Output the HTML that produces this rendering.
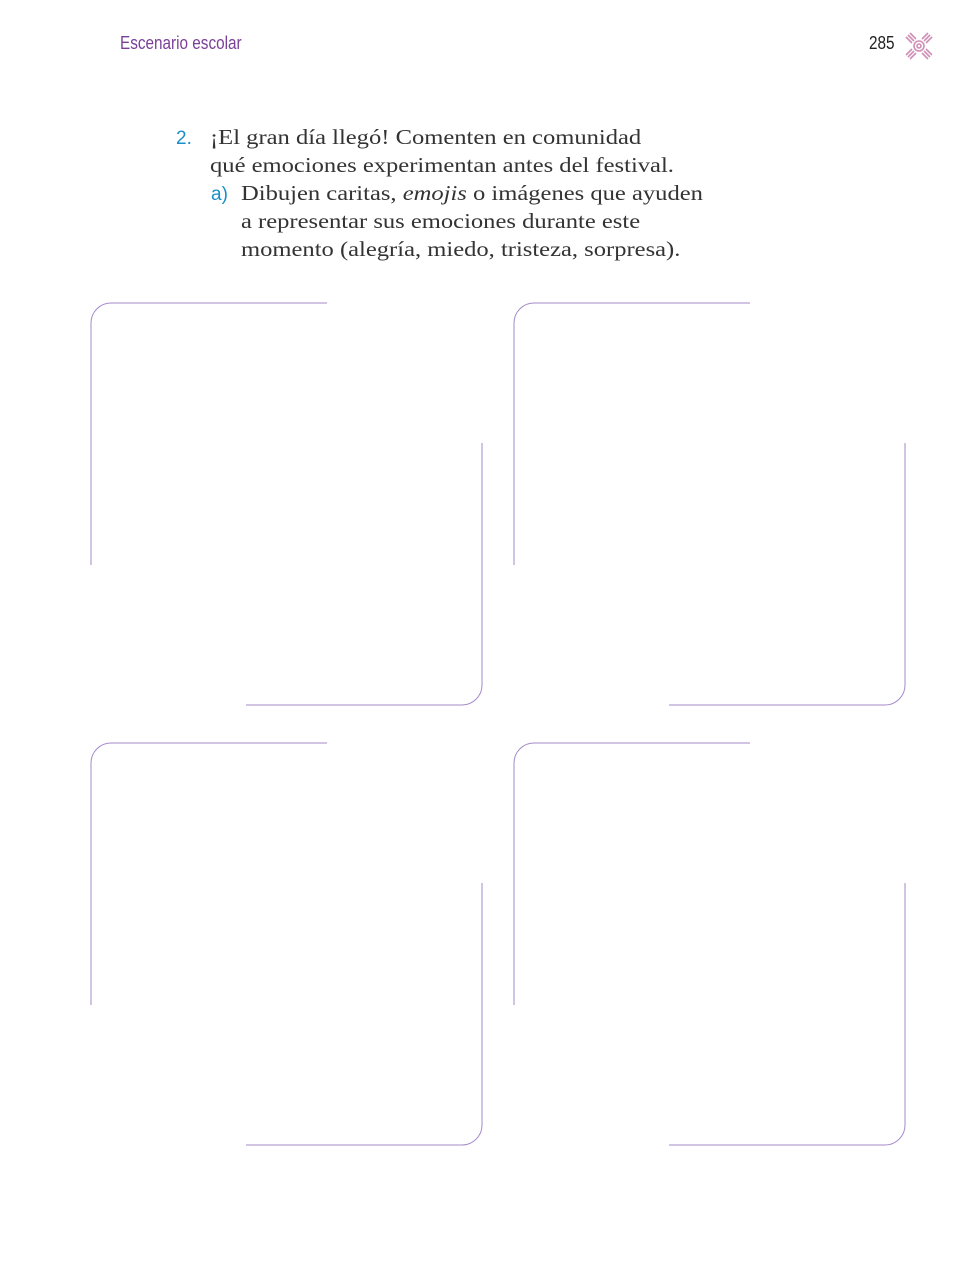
<!DOCTYPE html>
<html><head><meta charset="utf-8"><style>
body{margin:0;width:967px;height:1274px;background:#fff;position:relative;overflow:hidden}
.h{position:absolute;font-family:"Liberation Sans Narrow","Liberation Sans",sans-serif;font-size:18px}
.t{position:absolute;font-family:"Liberation Serif",serif;font-size:21px;color:#333;white-space:nowrap;line-height:28px;transform:scaleX(1.17);transform-origin:left}
.b{color:#1a8fc9;font-family:"Liberation Sans",sans-serif;font-size:19px}
</style></head><body>
<div class="h" style="left:120px;top:33px;color:#7a3f98;transform:scaleX(0.85);transform-origin:left">Escenario escolar</div>
<div class="h" style="left:869px;top:33px;color:#222;transform:scaleX(0.85);transform-origin:left">285</div>
<svg style="position:absolute;left:904px;top:31px" width="30" height="30" viewBox="0 0 30 30" stroke="#d08fb5" stroke-width="1.6" fill="none">
<path d="M2 6 L8 12 M6 2 L12 8 M4 4 L10 10 M28 6 L22 12 M24 2 L18 8 M26 4 L20 10 M2 24 L8 18 M6 28 L12 22 M4 26 L10 20 M28 24 L22 18 M24 28 L18 22 M26 26 L20 20"/>
<circle cx="15" cy="15" r="5"/><circle cx="15" cy="15" r="2"/>
</svg>
<div class="t" style="left:176px;top:123px;transform:none"><span class="b">2.</span></div>
<div class="t" style="left:210px;top:123px">¡El gran día llegó! Comenten en comunidad<br>qué emociones experimentan antes del festival.</div>
<div class="t" style="left:211px;top:179px;transform:none"><span class="b">a)</span></div>
<div class="t" style="left:241px;top:179px">Dibujen caritas, <i>emojis</i> o imágenes que ayuden<br>a representar sus emociones durante este<br>momento (alegría, miedo, tristeza, sorpresa).</div>
<svg style="position:absolute;left:0;top:0" width="967" height="1274" fill="none" stroke="#a58bc8" stroke-width="1">
<g id="bx"><path d="M91 565 V323 A20 20 0 0 1 111 303 H327"/><path d="M482 443 V685 A20 20 0 0 1 462 705 H246"/></g>
<use href="#bx" x="423"/><use href="#bx" y="440"/><use href="#bx" x="423" y="440"/>
</svg>
</body></html>
